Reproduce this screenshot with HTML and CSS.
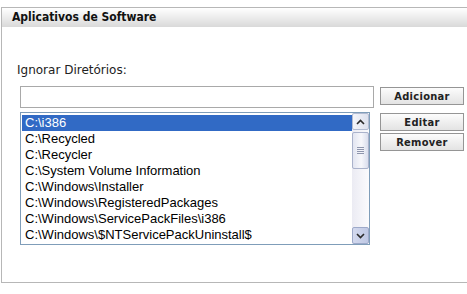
FILE: index.html
```html
<!DOCTYPE html>
<html lang="pt">
<head>
  <meta charset="UTF-8" />
  <meta name="viewport" content="width=device-width, initial-scale=1.0" />
  <title>Aplicativos de Software</title>
  <link rel="stylesheet" href="styles.css">
</head>
<body>
  <div class="panel">
    <div class="panel-header">Aplicativos de Software</div>

    <div class="panel-body">
      <label class="field-label" for="dir">Ignorar Diretórios:</label>

      <div class="row">
        <input type="text" id="dir" class="text-input" />
        <button type="button" class="btn btn-add">Adicionar</button>
      </div>

      <div class="row row-list">
        <div class="listbox">
          <ul class="list-items">
            <li class="selected">C:\i386</li>
            <li>C:\Recycled</li>
            <li>C:\Recycler</li>
            <li>C:\System Volume Information</li>
            <li>C:\Windows\Installer</li>
            <li>C:\Windows\RegisteredPackages</li>
            <li>C:\Windows\ServicePackFiles\i386</li>
            <li>C:\Windows\$NTServicePackUninstall$</li>
          </ul>

          <div class="scrollbar">
            <div class="sb-btn sb-up">
              <svg width="9" height="6" viewBox="0 0 9 6"><path d="M1 5 L4.5 1.5 L8 5" fill="none" stroke="#2b2b2b" stroke-width="1.6" /></svg>
            </div>
            <div class="sb-thumb">
              <span class="grip"></span>
              <span class="grip"></span>
              <span class="grip"></span>
              <span class="grip"></span>
            </div>
            <div class="sb-track"></div>
            <div class="sb-btn sb-down">
              <svg width="9" height="6" viewBox="0 0 9 6"><path d="M1 1 L4.5 4.5 L8 1" fill="none" stroke="#2b2b2b" stroke-width="1.6" /></svg>
            </div>
          </div>
        </div>

        <div class="btn-col">
          <button type="button" class="btn">Editar</button>
          <button type="button" class="btn">Remover</button>
        </div>
      </div>
    </div>
  </div>
</body>
</html>
```

FILE: styles.css
```css
body {
  margin: 0;
  background: #fff;
  font-family: "DejaVu Sans", Verdana, sans-serif;
  color: #222;
}

.panel {
  margin: 7px 0 0 1px;
  height: 274px;
  border: 1px solid #b7b7b7;
  border-right: none;
}

.panel-header {
  height: 19px;
  line-height: 19px;
  padding-left: 10px;
  background: linear-gradient(#ffffff, #d9d9d9);
  font-family: "DejaVu Sans Condensed", "DejaVu Sans", sans-serif;
  font-weight: bold;
  font-size: 12px;
  color: #111;
}

.panel-body {
  padding: 36px 0 0 15px;
}

.field-label {
  display: block;
  font-size: 12px;
  line-height: 14px;
  margin-bottom: 9px;
  color: #222;
}

.row {
  display: flex;
  align-items: flex-start;
  margin-left: 3px;
}

.row-list {
  margin-top: 4px;
}

.text-input {
  box-sizing: border-box;
  width: 354px;
  height: 22px;
  margin: 0 6px 0 0;
  padding: 2px 3px;
  border: 1px solid #a9a9a9;
  font-size: 13px;
}

.btn {
  box-sizing: border-box;
  width: 84px;
  height: 18px;
  padding: 0;
  border: 1px solid #959595;
  background: linear-gradient(#fcfcfc, #e3e3e3);
  font-family: "DejaVu Sans Condensed", "DejaVu Sans", sans-serif;
  font-weight: bold;
  font-size: 11px;
  letter-spacing: 0.3px;
  color: #222;
}

.btn-add {
  margin-top: 1px;
}

.btn-col {
  display: flex;
  flex-direction: column;
  gap: 2px;
  margin: 1px 0 0 10px;
}

.listbox {
  box-sizing: border-box;
  display: flex;
  width: 350px;
  height: 133px;
  padding-left: 1px;
  border: 1px solid #7f9db9;
}

.list-items {
  flex: 1;
  margin: 0;
  padding: 2px 0 0 0;
  list-style: none;
  font-family: "Liberation Sans", Arial, sans-serif;
  font-size: 13px;
  color: #000;
}

.list-items li {
  height: 16px;
  line-height: 16px;
  padding-left: 3px;
  white-space: nowrap;
  overflow: hidden;
}

.list-items li.selected {
  background: #316ac5;
  color: #fff;
}

.scrollbar {
  display: flex;
  flex-direction: column;
  width: 17px;
  background: linear-gradient(to right, #ebebf3, #fbfbfd);
}

.sb-btn {
  box-sizing: border-box;
  display: flex;
  align-items: center;
  justify-content: center;
  height: 17px;
  border: 1px solid #b2bbd2;
  border-radius: 2px;
}

.sb-up {
  background: linear-gradient(to right, #f4f5fa, #dde1ee);
}

.sb-down {
  background: linear-gradient(to right, #d3d9ee, #bfc8e4);
  border-color: #9da9c9;
}

.sb-thumb {
  box-sizing: border-box;
  display: flex;
  flex-direction: column;
  align-items: center;
  justify-content: center;
  gap: 1px;
  height: 37px;
  margin-top: 2px;
  border: 1px solid #aab2cb;
  border-radius: 2px;
  background: linear-gradient(to right, #e2e5f1, #f7f7fb 55%, #dadeed);
}

.grip {
  width: 7px;
  height: 1px;
  background: #8e95ad;
}

.sb-track {
  flex: 1;
}
```
